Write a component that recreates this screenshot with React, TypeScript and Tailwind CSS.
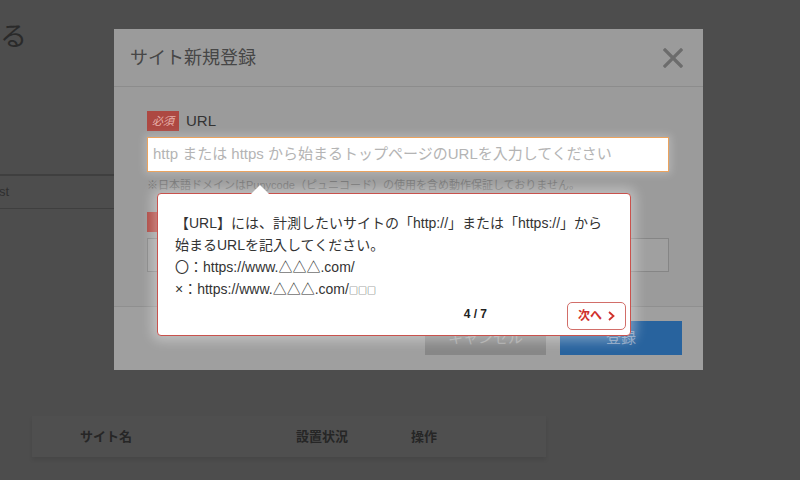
import React from "react";

const FONT = '"Liberation Sans", "Noto Sans CJK JP", sans-serif';

export default function App() {
  return (
    <div
      className="relative w-[800px] h-[480px] overflow-hidden bg-[#4d4d4d]"
      style={{ fontFamily: FONT }}
    >
      {/* background page */}
      <div className="flex flex-col">
        <div className="pt-[22px] pl-0 text-[27px] leading-[30px] text-[#2a2a2a]">る</div>
        <div className="mt-[122px] w-[400px] h-[35px] border-t-2 border-b border-[#3f3f3f] flex items-center text-[13px] text-[#2f2f2f]">
          <span className="-ml-[1px]">st</span>
        </div>
        <div className="mt-[207px] ml-[32px] w-[514px] h-[41px] bg-[#4f4f4f] shadow-[0_3px_4px_rgba(0,0,0,0.08)] flex items-center text-[13px] font-bold text-[#262626]">
          <span className="pl-[48px] w-[264px]">サイト名</span>
          <span className="w-[115px]">設置状況</span>
          <span>操作</span>
        </div>
      </div>

      {/* modal */}
      <div className="absolute left-[114px] top-[29px] w-[589px] h-[341px] bg-[#9b9b9b] flex flex-col">
        <div className="h-[58px] border-b border-[#8c8c8c] flex items-center justify-between pl-[16px] pr-[20px]">
          <span className="text-[18px] text-[#464646] pt-[1px]">サイト新規登録</span>
          <svg width="20" height="20" viewBox="0 0 20 20" className="mt-[1px]">
            <path d="M2 2 L18 18 M18 2 L2 18" stroke="#6c6c6c" strokeWidth="3.2" strokeLinecap="square" />
          </svg>
        </div>
        <div className="h-[219px] pt-[24px] pl-[33px] pr-[34px] flex flex-col">
          <div className="flex items-center h-[20px] gap-[7px]">
            <span className="w-[32px] h-[20px] bg-[#ad4842] text-[#e7b0aa] text-[11px] flex items-center justify-center italic">必須</span>
            <span className="text-[15px] text-[#333333]">URL</span>
          </div>
          <div className="mt-[6px] h-[35px] bg-white border-[1.5px] border-[#eba35e] flex items-center pl-[5px] text-[15px] text-[#b4b4b4] shadow-[0_0_8px_2px_rgba(255,255,255,0.25)]">
            http または https から始まるトップページのURLを入力してください
          </div>
          <div className="mt-[6px] text-[11px] leading-[14px] text-[#767676]">
            ※日本語ドメインはPunycode（ピュニコード）の使用を含め動作保証しておりません。
          </div>
          <div className="mt-[20px] flex items-center h-[20px] gap-[7px]">
            <span className="w-[32px] h-[20px] bg-[#ad4842]"></span>
          </div>
          <div className="mt-[6px] h-[34px] border border-[#858585] bg-[#a0a0a0]"></div>
        </div>
        <div className="flex-1 border-t border-[#8f8f8f] bg-[#9f9f9f] flex justify-end items-start pt-[14px] pr-[21px] gap-[14px]">
          <div className="w-[121px] h-[34px] bg-[#878787] text-[#a8a8a8] text-[15px] flex items-center justify-center">キャンセル</div>
          <div className="w-[122px] h-[34px] bg-[#28639e] text-[#86a0c0] text-[15px] flex items-center justify-center">登録</div>
        </div>
      </div>

      {/* tour tooltip */}
      <div className="absolute left-[157px] top-[193px] w-[474px] h-[143px] bg-white border border-[#c9524d] rounded-[4px] shadow-[0_0_12px_5px_rgba(255,255,255,0.35)] flex flex-col">
        <svg
          width="20"
          height="10"
          viewBox="0 0 20 10"
          className="absolute left-[92px] -top-[9px]"
        >
          <path d="M0 10 L10 0 L20 10 Z" fill="white" />
        </svg>
        <div className="pt-[18px] pl-[17px] pr-[10px] text-[14px] leading-[22px] text-[#333333]">
          <div>【URL】には、計測したいサイトの「http://」または「https://」から</div>
          <div>始まるURLを記入してください。</div>
          <div>〇：https://www.△△△.com/</div>
          <div>
            ×：https://www.△△△.com/
            <span className="text-[9px] text-[#333333]" style={{ fontFamily: '"Noto Sans CJK JP", sans-serif' }}>□□□</span>
          </div>
        </div>
        <div className="flex-1 flex items-end justify-end pb-[11px] pr-[4px] gap-[80px]">
          <span className="text-[12px] font-bold text-[#222222] mb-[7px]">4 / 7</span>
          <div className="w-[59px] h-[28px] border border-[#d26e69] rounded-[5px] flex items-center pl-[10px] gap-[6px] text-[12px] font-bold text-[#d0312b]">
            <span>次へ</span>
            <svg width="7" height="10" viewBox="0 0 7 10">
              <path d="M1 1 L5.5 5 L1 9" fill="none" stroke="#d0312b" strokeWidth="1.8" />
            </svg>
          </div>
        </div>
      </div>
    </div>
  );
}
